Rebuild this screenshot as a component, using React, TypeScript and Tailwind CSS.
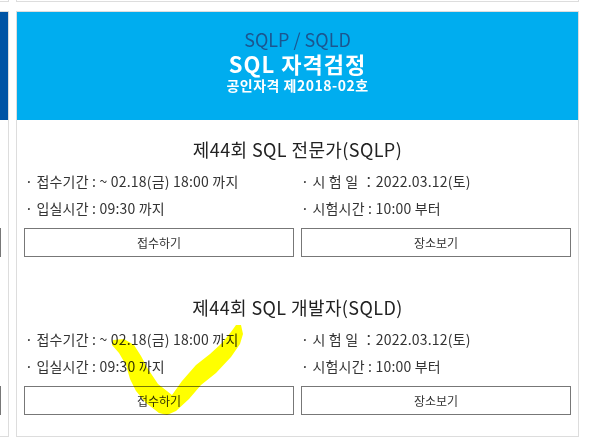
import React from 'react';

const font = { fontFamily: '"Noto Sans CJK KR", "Noto Sans", sans-serif' };

type Exam = {
  title: string;
  period: string;
  enter: string;
  date: string;
  start: string;
};

const exams: Exam[] = [
  {
    title: '제44회 SQL 전문가(SQLP)',
    period: '· 접수기간 : ~ 02.18(금) 18:00 까지',
    enter: '· 입실시간 : 09:30 까지',
    date: '· 시 험 일 ：2022.03.12(토)',
    start: '· 시험시간 : 10:00 부터',
  },
  {
    title: '제44회 SQL 개발자(SQLD)',
    period: '· 접수기간 : ~ 02.18(금) 18:00 까지',
    enter: '· 입실시간 : 09:30 까지',
    date: '· 시 험 일 ：2022.03.12(토)',
    start: '· 시험시간 : 10:00 부터',
  },
];

const ExamBlock = ({ exam, first }: { exam?: Exam; first?: boolean }) => (
  <div className={first ? 'pt-[17px]' : 'pt-[38px]'}>
    <h3 className="h-[24px] text-center text-[18px] leading-[24px] text-[#222] tracking-[0.4px]">{exam?.title}</h3>
    <div className="mt-[7px] grid grid-cols-2 gap-x-[7px] text-[14px] leading-[27px] text-[#333] tracking-[0.2px]">
      <div className="h-[27px] pl-[1px]">{exam?.period}</div>
      <div className="h-[27px]">{exam?.date}</div>
      <div className="h-[27px] pl-[1px]">{exam?.enter}</div>
      <div className="h-[27px]">{exam?.start}</div>
    </div>
    <div className="mt-[6px] grid grid-cols-2 gap-x-[7px]">
      <button className="h-[29px] border border-[#777] bg-white text-[12px] text-[#333]">{exam && '접수하기'}</button>
      <button className="h-[29px] border border-[#777] bg-white text-[12px] text-[#333]">{exam && '장소보기'}</button>
    </div>
  </div>
);

// previous card in the slider: only its right edge shows, so it carries no text
const Card = ({ headerBg, head, items }: { headerBg: string; head?: [string, string, string]; items?: Exam[] }) => (
  <div className="w-[563px] h-[426px] shrink-0 border border-[#ddd] bg-white">
    <div className={`h-[108px] pt-[16px] text-center ${headerBg}`}>
      {head && (
        <>
          <div className="text-[18px] leading-[22px] text-[#1b5690]">{head[0]}</div>
          <div className="text-[22px] leading-[26px] font-bold text-white tracking-[1px]">{head[1]}</div>
          <div className="text-[14px] leading-[18px] font-bold text-white tracking-[0.5px]">{head[2]}</div>
        </>
      )}
    </div>
    <div className="px-[7px] pb-[22px]">
      {[0, 1].map((i) => (
        <ExamBlock key={i} exam={items?.[i]} first={i === 0} />
      ))}
    </div>
  </div>
);

export default function App() {
  return (
    <div className="relative w-[607px] h-[442px] overflow-hidden bg-white" style={font}>
      {/* bottoms of the cards in the row above */}
      <div className="flex gap-[7px] -ml-[554px]">
        <div className="w-[563px] h-[2px] shrink-0 border-x border-b border-[#ddd]" />
        <div className="w-[563px] h-[2px] shrink-0 border-x border-b border-[#ddd]" />
      </div>
      <div className="mt-[9px] flex gap-[7px] -ml-[554px]">
        <Card headerBg="bg-[#0054a5]" />
        <Card headerBg="bg-[#00adef]" head={['SQLP / SQLD', 'SQL 자격검정', '공인자격 제2018-02호']} items={exams} />
      </div>
      {/* highlighter check mark */}
      <svg className="pointer-events-none absolute left-0 top-0 mix-blend-multiply" width="607" height="442" viewBox="0 0 607 442">
        <polygon
          fill="#ffff00"
          points="113,340 124,339 134,345 141,356 148,369 158,384 172,395 182,381 196,365 210,354 222,343 231,332 236,325 241,325 243,334 240,344 231,357 216,373 201,385 189,399 176,411 167,415 159,413 146,403 136,391 130,379 126,365 119,353 112,345"
        />
      </svg>
    </div>
  );
}
